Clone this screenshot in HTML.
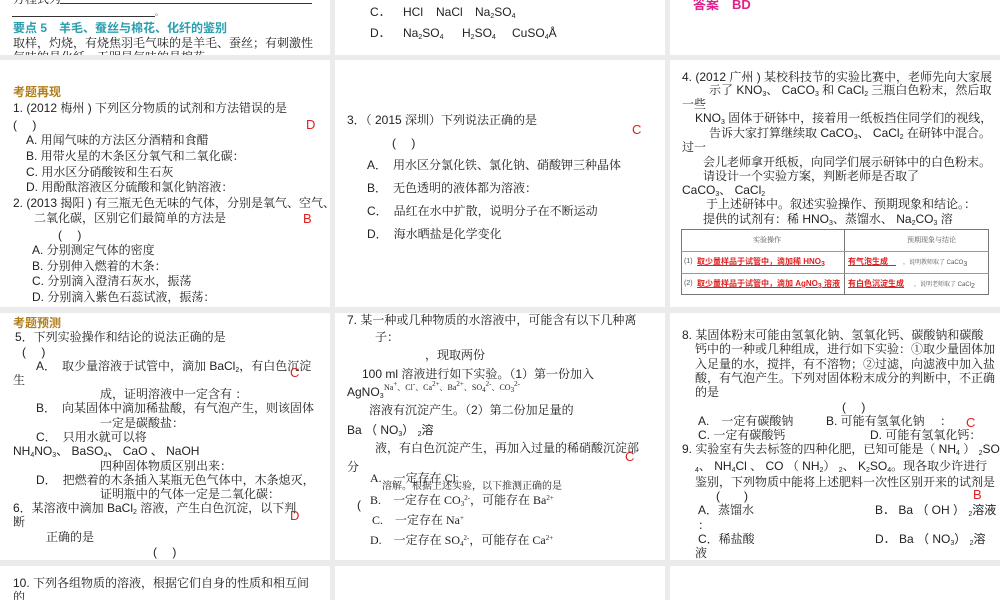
<!DOCTYPE html>
<html><head><meta charset="utf-8">
<style>
*{margin:0;padding:0;box-sizing:border-box}
body{width:1000px;height:600px;background:#ebebeb;position:relative;overflow:hidden;font-family:"Liberation Sans","Noto Serif CJK SC",serif;color:#222;font-size:12px}
.pn{position:absolute;background:#fff;overflow:hidden}
.t{position:absolute;white-space:nowrap;line-height:14px;font-size:12px}
.r{color:#e02020;font-family:"Liberation Sans",sans-serif;font-size:13px}
.s{font-family:"Liberation Sans","Noto Sans CJK SC",sans-serif}
sub{font-size:7px;vertical-align:-2px}
sup{font-size:7px;vertical-align:4px}
</style></head><body>
<!-- row1 -->
<div class="pn" style="left:0;top:0;width:330px;height:55px">
<div class="t" style="left:13px;top:-8px">方程式为</div>
<div style="position:absolute;left:60px;top:3px;width:252px;border-top:1px solid #333"></div>
<div style="position:absolute;left:12px;top:16px;width:143px;border-top:1px solid #333"></div>
<div class="t" style="left:155px;top:6px;font-size:8px">。</div>
<div class="t s" style="left:13px;top:21px;color:#2a9fb0;font-weight:bold">要点 5　羊毛、蚕丝与棉花、化纤的鉴别</div>
<div class="t" style="left:13px;top:36px">取样，灼烧，有烧焦羽毛气味的是羊毛、蚕丝；有刺激性</div>
<div class="t" style="left:13px;top:50px">气味的是化纤，无明显气味的是棉花。</div>
</div>
<div class="pn" style="left:335px;top:0;width:330px;height:55px">
<div class="t s" style="left:35px;top:5px">C．</div><div class="t s" style="left:68px;top:5px">HCl</div><div class="t s" style="left:101px;top:5px">NaCl</div><div class="t s" style="left:140px;top:5px">Na<sub>2</sub>SO<sub>4</sub></div>
<div class="t s" style="left:35px;top:26px">D．</div><div class="t s" style="left:68px;top:26px">Na<sub>2</sub>SO<sub>4</sub></div><div class="t s" style="left:127px;top:26px">H<sub>2</sub>SO<sub>4</sub></div><div class="t s" style="left:177px;top:26px">CuSO<sub>4</sub>Å</div>
</div>
<div class="pn" style="left:670px;top:0;width:330px;height:55px">
<div class="t s" style="left:23px;top:-2px;color:#e0208a;font-weight:bold;font-size:13px">答案　BD</div>
</div>
<!-- row2 -->
<div class="pn" style="left:0;top:60px;width:330px;height:247px">
<div class="t s" style="left:13px;top:25px;color:#b07d1a;font-weight:bold">考题再现</div>
<div class="t" style="left:13px;top:41px">1. (2012 梅州 ) 下列区分物质的试剂和方法错误的是</div>
<div class="t" style="left:13px;top:58px">(　 )</div><div class="t r" style="left:306px;top:58px">D</div>
<div class="t" style="left:26px;top:73px">A. 用闻气味的方法区分酒精和食醋</div>
<div class="t" style="left:26px;top:89px">B. 用带火星的木条区分氧气和二氧化碳：</div>
<div class="t" style="left:26px;top:105px">C. 用水区分硝酸铵和生石灰</div>
<div class="t" style="left:26px;top:120px">D. 用酚酞溶液区分硫酸和氯化钠溶液：</div>
<div class="t" style="left:13px;top:136px">2. (2013 揭阳 ) 有三瓶无色无味的气体，分别是氧气、空气、</div>
<div class="t" style="left:34px;top:151px">二氧化碳，区别它们最简单的方法是</div><div class="t r" style="left:303px;top:152px">B</div>
<div class="t" style="left:58px;top:168px">(　 )</div>
<div class="t" style="left:32px;top:183px">A. 分别测定气体的密度</div>
<div class="t" style="left:32px;top:199px">B. 分别伸入燃着的木条：</div>
<div class="t" style="left:32px;top:214px">C. 分别滴入澄清石灰水，振荡</div>
<div class="t" style="left:32px;top:230px">D. 分别滴入紫色石蕊试液，振荡：</div>
</div>
<div class="pn" style="left:335px;top:60px;width:330px;height:247px">
<div class="t" style="left:12px;top:53px">3．（ 2015 深圳）下列说法正确的是</div><div class="t r" style="left:297px;top:63px">C</div>
<div class="t" style="left:57px;top:76px">(　 )</div>
<div class="t" style="left:32px;top:98px">A．　用水区分氯化铁、氯化钠、硝酸钾三种晶体</div>
<div class="t" style="left:32px;top:121px">B．　无色透明的液体都为溶液：</div>
<div class="t" style="left:32px;top:144px">C．　品红在水中扩散，说明分子在不断运动</div>
<div class="t" style="left:32px;top:167px">D．　海水晒盐是化学变化</div>
</div>
<div class="pn" style="left:670px;top:60px;width:330px;height:247px">
<div class="t" style="left:12px;top:10px">4. (2012 广州 ) 某校科技节的实验比赛中，老师先向大家展</div>
<div class="t" style="left:39px;top:23px">示了 KNO<sub>3</sub>、 CaCO<sub>3</sub> 和 CaCl<sub>2</sub> 三瓶白色粉末，然后取</div>
<div class="t" style="left:12px;top:37px">一些</div>
<div class="t" style="left:25px;top:51px">KNO<sub>3</sub> 固体于研钵中，接着用一纸板挡住同学们的视线，</div>
<div class="t" style="left:39px;top:66px">告诉大家打算继续取 CaCO<sub>3</sub>、 CaCl<sub>2</sub> 在研钵中混合。</div>
<div class="t" style="left:12px;top:80px">过一</div>
<div class="t" style="left:33px;top:95px">会儿老师拿开纸板，向同学们展示研钵中的白色粉末。</div>
<div class="t" style="left:33px;top:109px">请设计一个实验方案，判断老师是否取了</div>
<div class="t" style="left:12px;top:123px">CaCO<sub>3</sub>、 CaCl<sub>2</sub></div>
<div class="t" style="left:36px;top:137px">于上述研钵中。叙述实验操作、预期现象和结论。：</div>
<div class="t" style="left:33px;top:152px">提供的试剂有：稀 HNO<sub>3</sub>、蒸馏水、 Na<sub>2</sub>CO<sub>3</sub> 溶</div>
<div style="position:absolute;left:11px;top:169px;width:308px;height:66px;border:1px solid #777"></div>
<div style="position:absolute;left:174px;top:169px;height:66px;border-left:1px solid #777"></div>
<div style="position:absolute;left:11px;top:191px;width:308px;border-top:1px solid #999"></div>
<div style="position:absolute;left:11px;top:213px;width:308px;border-top:1px solid #999"></div>
<div class="t" style="left:83px;top:174px;font-size:7px;color:#555">实验操作</div>
<div class="t" style="left:237px;top:174px;font-size:7px;color:#555">预期现象与结论</div>
<div class="t" style="left:14px;top:195px;font-size:7px;color:#555">(1)</div>
<div class="t s" style="left:27px;top:195px;font-size:8px;color:#e02020;font-weight:bold;text-decoration:underline">取少量样品于试管中，滴加稀 HNO<sub>3</sub></div>
<div class="t s" style="left:178px;top:195px;font-size:8px;color:#e02020;font-weight:bold;text-decoration:underline">有气泡生成　</div>
<div class="t" style="left:233px;top:196px;font-size:6px;color:#555">，说明教师取了 CaCO<sub>3</sub></div>
<div class="t" style="left:14px;top:217px;font-size:7px;color:#555">(2)</div>
<div class="t s" style="left:27px;top:217px;font-size:8px;color:#e02020;font-weight:bold;text-decoration:underline">取少量样品于试管中，滴加 AgNO<sub>3</sub> 溶液</div>
<div class="t s" style="left:178px;top:217px;font-size:8px;color:#e02020;font-weight:bold;text-decoration:underline">有白色沉淀生成</div>
<div class="t" style="left:244px;top:218px;font-size:6px;color:#555">，说明老师取了 CaCl<sub>2</sub></div>
</div>
<!-- row3 -->
<div class="pn" style="left:0;top:313px;width:330px;height:247px">
<div class="t s" style="left:13px;top:3px;color:#b07d1a;font-weight:bold">考题预测</div>
<div class="t" style="left:15px;top:17px">5．下列实验操作和结论的说法正确的是</div>
<div class="t" style="left:22px;top:32px">(　 )</div>
<div class="t" style="left:36px;top:46px">A．　取少量溶液于试管中，滴加 BaCl<sub>2</sub>，有白色沉淀</div><div class="t r" style="left:290px;top:53px">C</div>
<div class="t" style="left:13px;top:60px">生</div>
<div class="t" style="left:100px;top:74px">成，证明溶液中一定含有 ：</div>
<div class="t" style="left:36px;top:88px">B．　向某固体中滴加稀盐酸，有气泡产生，则该固体</div>
<div class="t" style="left:100px;top:103px">一定是碳酸盐：</div>
<div class="t" style="left:36px;top:117px">C．　只用水就可以将</div>
<div class="t s" style="left:13px;top:131px">NH<sub>4</sub>NO<sub>3</sub>、 BaSO<sub>4</sub>、 CaO 、 NaOH</div>
<div class="t" style="left:100px;top:146px">四种固体物质区别出来：</div>
<div class="t" style="left:36px;top:160px">D．　把燃着的木条插入某瓶无色气体中，木条熄灭，</div>
<div class="t" style="left:100px;top:174px">证明瓶中的气体一定是二氧化碳：</div>
<div class="t" style="left:13px;top:188px">6．某溶液中滴加 BaCl<sub>2</sub> 溶液，产生白色沉淀，以下判</div><div class="t r" style="left:290px;top:196px">D</div>
<div class="t" style="left:13px;top:202px">断</div>
<div class="t" style="left:46px;top:217px">正确的是</div>
<div class="t" style="left:153px;top:232px">(　 )</div>
</div>
<div class="pn" style="left:335px;top:313px;width:330px;height:247px">
<div class="t" style="left:12px;top:0px">7. 某一种或几种物质的水溶液中，可能含有以下几种离</div>
<div class="t" style="left:40px;top:17px">子：</div>
<div class="t" style="left:90px;top:35px">，现取两份</div>
<div class="t" style="left:27px;top:54px">100 ml 溶液进行如下实验。（1）第一份加入</div>
<div class="t" style="left:49px;top:64px;font-size:8px;font-family:'Liberation Serif','Noto Serif CJK SC',serif">Na<sup>+</sup>、Cl<sup>-</sup>、Ca<sup>2+</sup>、Ba<sup>2+</sup>、SO<sub>4</sub><sup>2-</sup>、CO<sub>3</sub><sup>2-</sup></div>
<div class="t s" style="left:12px;top:72px">AgNO<sub>3</sub></div>
<div class="t" style="left:34px;top:90px">溶液有沉淀产生。（2）第二份加足量的</div>
<div class="t s" style="left:12px;top:110px">Ba （ NO<sub>3</sub>） <sub>2</sub>溶</div>
<div class="t" style="left:40px;top:128px">液，有白色沉淀产生，再加入过量的稀硝酸沉淀部</div><div class="t r" style="left:290px;top:137px">C</div>
<div class="t" style="left:12px;top:147px">分</div>
<div class="t" style="left:35px;top:156px;font-family:'Liberation Serif','Noto Serif CJK SC',serif">A.　一定存在 Cl<sup>-</sup></div>
<div class="t" style="left:47px;top:167px;font-size:10px">溶解。根据上述实验，以下推测正确的是</div>
<div class="t" style="left:22px;top:185px">(</div>
<div class="t" style="left:35px;top:178px;font-family:'Liberation Serif','Noto Serif CJK SC',serif">B.　一定存在 CO<sub>3</sub><sup>2-</sup>，可能存在 Ba<sup>2+</sup></div>
<div class="t" style="left:37px;top:198px;font-family:'Liberation Serif','Noto Serif CJK SC',serif">C.　一定存在 Na<sup>+</sup></div>
<div class="t" style="left:35px;top:218px;font-family:'Liberation Serif','Noto Serif CJK SC',serif">D.　一定存在 SO<sub>4</sub><sup>2-</sup>，可能存在 Ca<sup>2+</sup></div>
</div>
<div class="pn" style="left:670px;top:313px;width:330px;height:247px">
<div class="t" style="left:12px;top:15px">8. 某固体粉末可能由氢氧化钠、氢氧化钙、碳酸钠和碳酸</div>
<div class="t" style="left:25px;top:29px">钙中的一种或几种组成，进行如下实验：①取少量固体加</div>
<div class="t" style="left:25px;top:44px">入足量的水，搅拌，有不溶物；②过滤，向滤液中加入盐</div>
<div class="t" style="left:25px;top:58px">酸，有气泡产生。下列对固体粉末成分的判断中，不正确</div>
<div class="t" style="left:25px;top:72px">的是</div>
<div class="t" style="left:172px;top:87px">(　 )</div>
<div class="t" style="left:28px;top:101px">A.　一定有碳酸钠</div><div class="t" style="left:156px;top:101px">B. 可能有氢氧化钠　 ：</div><div class="t r" style="left:296px;top:103px">C</div>
<div class="t" style="left:28px;top:115px">C. 一定有碳酸钙</div><div class="t" style="left:200px;top:115px">D. 可能有氢氧化钙：</div>
<div class="t" style="left:12px;top:129px">9. 实验室有失去标签的四种化肥，已知可能是（ NH<sub>4</sub> ） <sub>2</sub>SO</div>
<div class="t" style="left:25px;top:146px"><sub>4</sub>、 NH<sub>4</sub>Cl 、 CO （ NH<sub>2</sub>） <sub>2</sub>、 K<sub>2</sub>SO<sub>4</sub>。现各取少许进行</div>
<div class="t" style="left:25px;top:162px">鉴别，下列物质中能将上述肥料一次性区别开来的试剂是</div>
<div class="t" style="left:46px;top:176px">(　　)</div><div class="t r" style="left:303px;top:175px">B</div>
<div class="t" style="left:28px;top:190px">A．蒸馏水</div><div class="t s" style="left:205px;top:190px">B．  Ba （ OH ） <sub>2</sub>溶液</div>
<div class="t" style="left:28px;top:205px">：</div>
<div class="t" style="left:28px;top:219px">C．稀盐酸</div><div class="t s" style="left:205px;top:219px">D．  Ba （ NO<sub>3</sub>） <sub>2</sub>溶</div>
<div class="t" style="left:25px;top:233px">液</div>
</div>
<!-- row4 -->
<div class="pn" style="left:0;top:566px;width:330px;height:34px">
<div class="t" style="left:13px;top:10px">10. 下列各组物质的溶液，根据它们自身的性质和相互间</div>
<div class="t" style="left:13px;top:24px">的</div>
</div>
<div class="pn" style="left:335px;top:566px;width:330px;height:34px"></div>
<div class="pn" style="left:670px;top:566px;width:330px;height:34px"></div>
</body></html>
